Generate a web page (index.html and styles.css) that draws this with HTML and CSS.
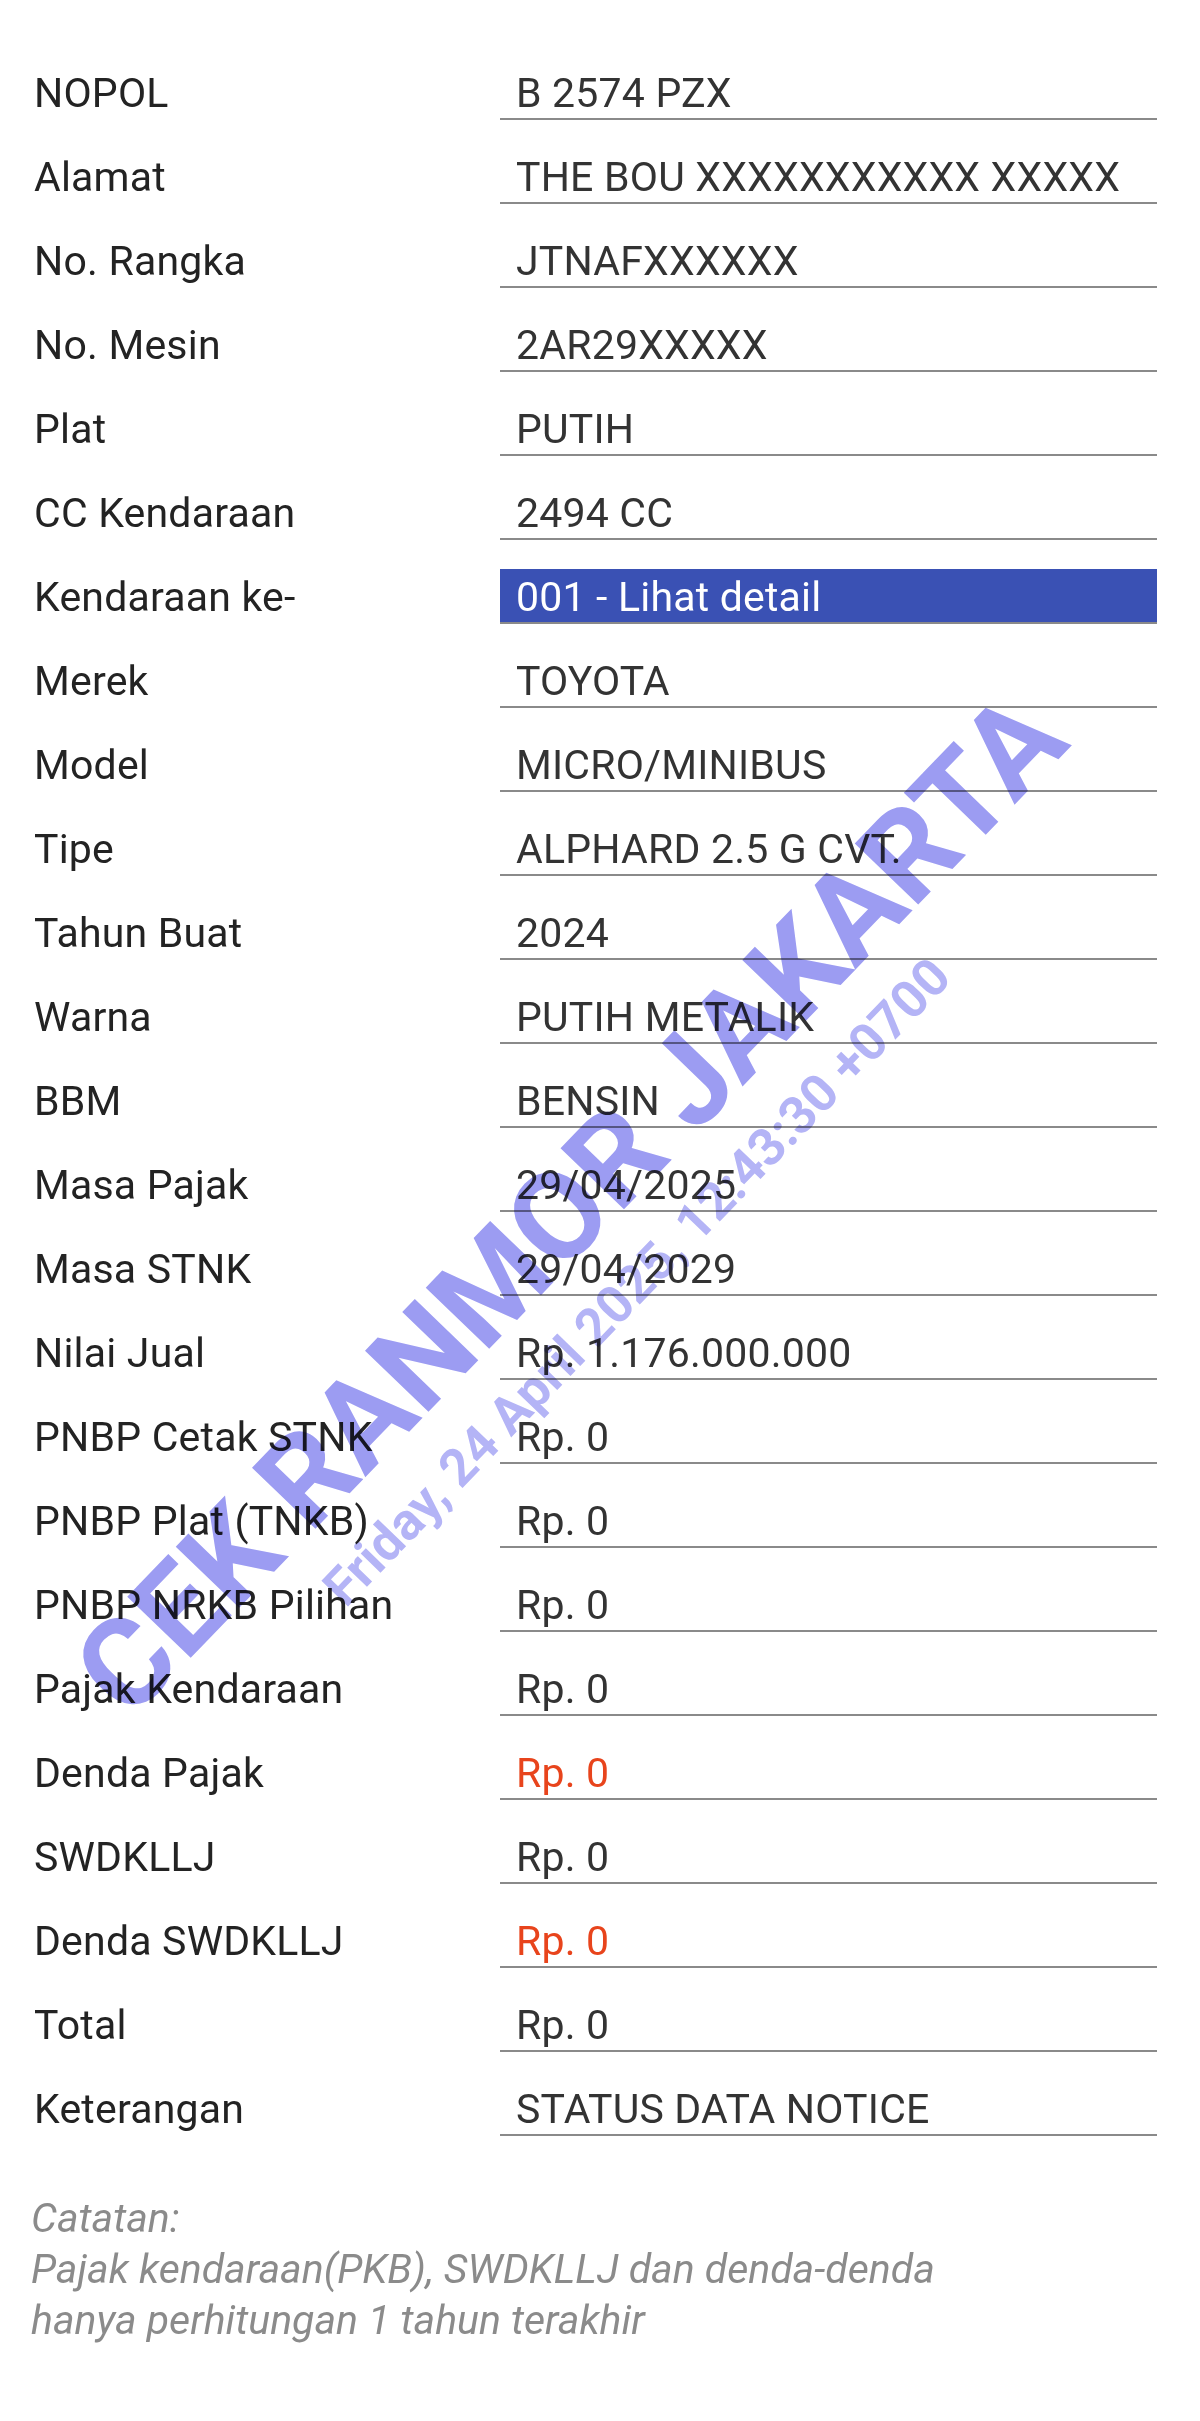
FILE: index.html
```html
<!DOCTYPE html>
<html lang="id">
<head>
<meta charset="utf-8">
<title>Cek Ranmor</title>
<link rel="stylesheet" href="styles.css">
</head>
<body>
<div class="page">
  <div class="rows">
    <div class="row"><div class="label">NOPOL</div><div class="value">B 2574 PZX</div></div>
    <div class="row"><div class="label">Alamat</div><div class="value">THE BOU XXXXXXXXXXX XXXXX</div></div>
    <div class="row"><div class="label">No. Rangka</div><div class="value">JTNAFXXXXXX</div></div>
    <div class="row"><div class="label">No. Mesin</div><div class="value">2AR29XXXXX</div></div>
    <div class="row"><div class="label">Plat</div><div class="value">PUTIH</div></div>
    <div class="row"><div class="label">CC Kendaraan</div><div class="value">2494 CC</div></div>
    <div class="row"><div class="label">Kendaraan ke-</div><div class="value value-link">001 - Lihat detail</div></div>
    <div class="row"><div class="label">Merek</div><div class="value">TOYOTA</div></div>
    <div class="row"><div class="label">Model</div><div class="value">MICRO/MINIBUS</div></div>
    <div class="row"><div class="label">Tipe</div><div class="value">ALPHARD 2.5 G CVT.</div></div>
    <div class="row"><div class="label">Tahun Buat</div><div class="value">2024</div></div>
    <div class="row"><div class="label">Warna</div><div class="value">PUTIH METALIK</div></div>
    <div class="row"><div class="label">BBM</div><div class="value">BENSIN</div></div>
    <div class="row"><div class="label">Masa Pajak</div><div class="value">29/04/2025</div></div>
    <div class="row"><div class="label">Masa STNK</div><div class="value">29/04/2029</div></div>
    <div class="row"><div class="label">Nilai Jual</div><div class="value">Rp. 1.176.000.000</div></div>
    <div class="row"><div class="label">PNBP Cetak STNK</div><div class="value">Rp. 0</div></div>
    <div class="row"><div class="label">PNBP Plat (TNKB)</div><div class="value">Rp. 0</div></div>
    <div class="row"><div class="label">PNBP NRKB Pilihan</div><div class="value">Rp. 0</div></div>
    <div class="row"><div class="label">Pajak Kendaraan</div><div class="value">Rp. 0</div></div>
    <div class="row"><div class="label">Denda Pajak</div><div class="value value-red">Rp. 0</div></div>
    <div class="row"><div class="label">SWDKLLJ</div><div class="value">Rp. 0</div></div>
    <div class="row"><div class="label">Denda SWDKLLJ</div><div class="value value-red">Rp. 0</div></div>
    <div class="row"><div class="label">Total</div><div class="value">Rp. 0</div></div>
    <div class="row"><div class="label">Keterangan</div><div class="value">STATUS DATA NOTICE</div></div>
  </div>
  <div class="note">
    <div>Catatan:</div>
    <div>Pajak kendaraan(PKB), SWDKLLJ dan denda-denda</div>
    <div>hanya perhitungan 1 tahun terakhir</div>
  </div>
  <div class="wm wm-main">CEK RANMOR JAKARTA</div>
  <div class="wm wm-date">Friday, 24 April 2025, 12:43:30 +0700</div>
</div>
</body>
</html>
```
FILE: styles.css
```css
html, body {
  margin: 0;
  padding: 0;
  background: #ffffff;
}

.page {
  position: relative;
  width: 1200px;
  min-height: 2421px;
  overflow: hidden;
  font-family: Roboto, "Liberation Sans", sans-serif;
}

.rows {
  display: flex;
  flex-direction: column;
  gap: 29px;
  padding: 65px 43px 0 34px;
}

.row {
  display: flex;
  align-items: stretch;
}

.label {
  width: 466px;
  flex: none;
  font-size: 41px;
  line-height: 49px;
  padding-top: 4px;
  color: #232323;
  letter-spacing: 0.2px;
}

.value {
  flex: 1;
  box-sizing: content-box;
  padding: 4px 0 0 16px;
  height: 49px;
  border-bottom: 2px solid #8a8a8a;
  font-size: 41px;
  line-height: 49px;
  color: #333333;
  letter-spacing: 0.2px;
  white-space: nowrap;
}

.value-link {
  background: #3a51b4;
  color: #ffffff;
}

.value-red {
  color: #e8441c;
}

.note {
  margin: 57px 0 0 31px;
  font-family: Roboto, "Liberation Sans", sans-serif;
  font-style: italic;
  font-size: 41px;
  line-height: 51px;
  color: #8b8b8b;
}

.wm {
  position: absolute;
  white-space: nowrap;
  font-family: Roboto, "Liberation Sans", sans-serif;
  font-weight: bold;
  mix-blend-mode: multiply;
  transform: translate(-50%, -50%) rotate(-46deg);
}

.wm-main {
  left: 570px;
  top: 1204px;
  font-size: 124px;
  color: #9c9cf2;
}

.wm-date {
  left: 637px;
  top: 1282px;
  font-size: 52px;
  color: #b4b4f6;
}
```
